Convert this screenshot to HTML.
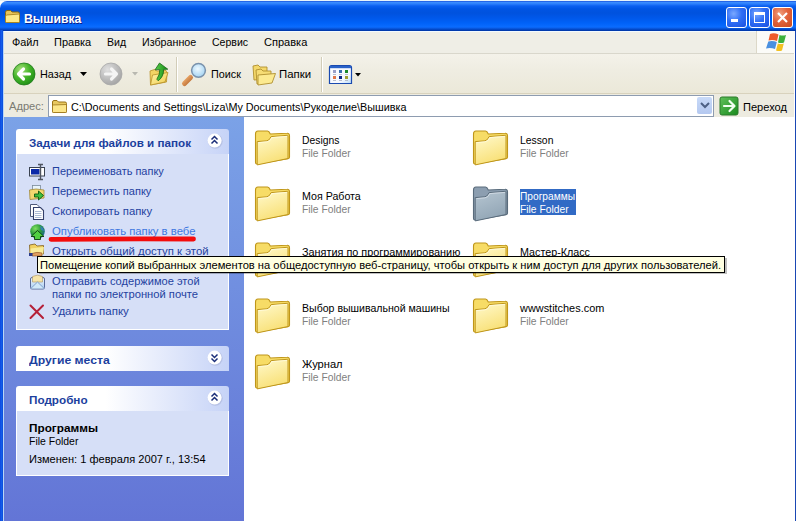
<!DOCTYPE html>
<html><head><meta charset="utf-8"><style>
html,body{margin:0;padding:0;}
body{width:796px;height:521px;position:relative;overflow:hidden;background:#fff;font-family:'Liberation Sans',sans-serif;}
</style></head><body>
<div style="position:absolute;left:0;top:0;width:796px;height:1px;background:#e6f2fa"></div>
<div style="position:absolute;left:0;top:1px;width:796px;height:30px;border-radius:7px 0 0 0;background:linear-gradient(to bottom,#0a3ad0 0px,#3d90ff 1px,#2a7dfb 3px,#0a5ff0 5px,#0054e3 8px,#0052de 12px,#0058ea 17px,#0062f8 22px,#0a6cff 26px,#0a5ee8 27px,#0040bb 29px,#0033a0 30px)"></div>
<svg style="position:absolute;left:4px;top:9px" width="17" height="15" viewBox="0 0 17 15">
<path d="M1.5 3.5 Q1.5 1.5 3 1.5 L6.5 1.5 L8 3 L14 3 Q15.5 3 15.5 4.5 L15.5 12.5 Q15.5 13.5 14.5 13.5 L2.5 13.5 Q1.5 13.5 1.5 12.5 Z" fill="#e8c45a" stroke="#8a6a10" stroke-width="1"/>
<path d="M2.5 6 L15.5 5 L15.5 12.5 Q15.5 13.5 14.5 13.5 L2.5 13.5 Q1.5 13.5 1.5 12.5 L1.5 7 Z" fill="#fde98a" stroke="#a07a18" stroke-width="0.8"/>
</svg>
<div style="position:absolute;left:24px;top:10px;font:bold 13px/16px 'Liberation Sans',sans-serif;color:#fff;text-shadow:1px 1px 0 #0a1e8c;white-space:nowrap;transform:scale(0.94,1.05);transform-origin:0 0">Вышивка</div>
<div style="position:absolute;left:726px;top:7px;width:19px;height:19px;border:1px solid #fff;border-radius:3px;background:radial-gradient(circle at 35% 30%,#7aa8ff 0%,#2f6ef5 45%,#1a50e0 100%)"></div>
<div style="position:absolute;left:749px;top:7px;width:19px;height:19px;border:1px solid #fff;border-radius:3px;background:radial-gradient(circle at 35% 30%,#7aa8ff 0%,#2f6ef5 45%,#1a50e0 100%)"></div>
<div style="position:absolute;left:772px;top:7px;width:19px;height:19px;border:1px solid #fff;border-radius:3px;background:radial-gradient(circle at 35% 30%,#f0a080 0%,#e2623c 45%,#c84a20 100%)"></div>
<div style="position:absolute;left:731px;top:19px;width:7px;height:3px;background:#fff"></div>
<div style="position:absolute;left:754px;top:12px;width:9px;height:7px;border:1px solid #fff;border-top-width:3px"></div>
<svg style="position:absolute;left:772px;top:7px" width="21" height="21" viewBox="0 0 21 21"><path d="M6 6 L15 15 M15 6 L6 15" stroke="#fff" stroke-width="2.2"/></svg>
<div style="position:absolute;left:0px;top:30px;width:3px;height:491px;background:linear-gradient(to right,#0831d9 0,#166aee 1px,#0d50e0 2px)"></div>
<div style="position:absolute;left:795px;top:31px;width:1px;height:490px;background:#1a48b4"></div>
<div style="position:absolute;left:3px;top:31px;width:791px;height:22px;background:#efeee6"></div>
<div style="position:absolute;left:3px;top:53px;width:791px;height:1px;background:#d9d7cc"></div>
<div style="position:absolute;left:3px;top:31px;width:791px;height:1px;background:#f2faff"></div>
<div style="position:absolute;left:756px;top:31px;width:38px;height:22px;background:#fbfbf8;border-left:1px solid #dcd8c8"></div>
<svg style="position:absolute;left:760px;top:30px" width="30" height="24" viewBox="760 30 30 24">
<path d="M770 34 Q774 32.5 778.5 34.5 L777 41 Q773 39.5 768.5 40.5 Z" fill="#ee5a2a"/>
<path d="M779.5 35 Q782.5 36 786 35 L784 42.5 Q781 43.5 778 42.5 Z" fill="#3cb03a"/>
<path d="M768.3 41.5 Q772.5 40.5 776.8 42 L775 49 Q770.5 47.5 766 48.5 Z" fill="#4a90e0"/>
<path d="M777.8 43.5 Q781 44.5 783.8 43.5 L782 50.5 Q779 51.5 776 50.5 Z" fill="#f2c020"/>
</svg>
<div id="t0" style="position:absolute;left:12px;top:36px;white-space:nowrap;font:400 11px/13px 'Liberation Sans',sans-serif;color:#000;transform:scaleX(0.9872);transform-origin:0 0;"><span style="">Файл</span></div>
<div id="t1" style="position:absolute;left:54px;top:36px;white-space:nowrap;font:400 11px/13px 'Liberation Sans',sans-serif;color:#000;"><span style="">Правка</span></div>
<div id="t2" style="position:absolute;left:107px;top:36px;white-space:nowrap;font:400 11px/13px 'Liberation Sans',sans-serif;color:#000;transform:scaleX(0.9595);transform-origin:0 0;"><span style="">Вид</span></div>
<div id="t3" style="position:absolute;left:142px;top:36px;white-space:nowrap;font:400 11px/13px 'Liberation Sans',sans-serif;color:#000;transform:scaleX(0.9722);transform-origin:0 0;"><span style="">Избранное</span></div>
<div id="t4" style="position:absolute;left:212px;top:36px;white-space:nowrap;font:400 11px/13px 'Liberation Sans',sans-serif;color:#000;transform:scaleX(0.9583);transform-origin:0 0;"><span style="">Сервис</span></div>
<div id="t5" style="position:absolute;left:264px;top:36px;white-space:nowrap;font:400 11px/13px 'Liberation Sans',sans-serif;color:#000;transform:scaleX(1.0033);transform-origin:0 0;"><span style="">Справка</span></div>
<div style="position:absolute;left:3px;top:54px;width:791px;height:40px;background:linear-gradient(to bottom,#f4f2ea 0,#efede2 40%,#ebe8d8 100%)"></div>
<div style="position:absolute;left:3px;top:93px;width:791px;height:1px;background:#d8d2bd"></div>
<svg style="position:absolute;left:12px;top:62px" width="25" height="25" viewBox="0 0 25 25">
<defs><radialGradient id="gb" cx="0.35" cy="0.3" r="0.8"><stop offset="0" stop-color="#a6e07a"/><stop offset="0.5" stop-color="#45b52a"/><stop offset="1" stop-color="#1a8a14"/></radialGradient></defs>
<circle cx="12" cy="12" r="11" fill="url(#gb)" stroke="#1f7a1a" stroke-width="0.8"/>
<path d="M11.5 7 L6.5 12 L11.5 17 M6.5 12 L17.5 12" stroke="#fff" stroke-width="3.2" stroke-linecap="round" stroke-linejoin="round" fill="none"/>
</svg>
<div id="t6" style="position:absolute;left:40px;top:68px;white-space:nowrap;font:400 11px/13px 'Liberation Sans',sans-serif;color:#000;transform:scaleX(0.9863);transform-origin:0 0;"><span style="">Назад</span></div>
<svg style="position:absolute;left:80px;top:72px" width="7" height="4"><path d="M0 0 L7 0 L3.5 4 Z" fill="#000"/></svg>
<svg style="position:absolute;left:99px;top:62px" width="25" height="25" viewBox="0 0 25 25">
<defs><radialGradient id="gf" cx="0.35" cy="0.3" r="0.8"><stop offset="0" stop-color="#e0e0e0"/><stop offset="0.6" stop-color="#b8b8b8"/><stop offset="1" stop-color="#a0a0a0"/></radialGradient></defs>
<circle cx="12" cy="12" r="11" fill="url(#gf)" stroke="#a8a8a8" stroke-width="0.8"/>
<path d="M12.5 7 L17.5 12 L12.5 17 M17.5 12 L6.5 12" stroke="#f4f4f4" stroke-width="3.2" stroke-linecap="round" stroke-linejoin="round" fill="none"/>
</svg>
<svg style="position:absolute;left:132px;top:72px" width="6" height="4"><path d="M0 0 L6 0 L3 3.5 Z" fill="#b8b8b0"/></svg>
<svg style="position:absolute;left:146px;top:60px" width="26" height="28" viewBox="146 60 26 28">
<defs><linearGradient id="gup" x1="0" y1="0" x2="1" y2="1"><stop offset="0" stop-color="#fff4a8"/><stop offset="1" stop-color="#f0cc50"/></linearGradient>
<linearGradient id="gar" x1="0" y1="0" x2="1" y2="0"><stop offset="0" stop-color="#5ad04a"/><stop offset="1" stop-color="#158a15"/></linearGradient></defs>
<path d="M150 71 L154.5 69.5 L157 71 L166 70.5 L167 73 L166.5 82 L150.5 85 Z" fill="#f2d464" stroke="#b89028" stroke-width="0.8"/>
<path d="M150.5 85 L152.5 75 L168 72.5 L165 82 Z" fill="url(#gup)" stroke="#b89028" stroke-width="0.8"/>
<path d="M159.5 63 L167.8 69.2 L163.6 69.4 Q164 76.5 158.2 80.8 L156.8 79.2 Q160 74.5 159.8 69.6 L155 69.8 Z" fill="url(#gar)" stroke="#0e5a10" stroke-width="0.7"/>
</svg>
<div style="position:absolute;left:176px;top:57px;width:1px;height:35px;background:#d2cdb8;border-right:1px solid #fff"></div>
<svg style="position:absolute;left:180px;top:60px" width="30" height="28" viewBox="180 60 30 28">
<defs><radialGradient id="gs" cx="0.45" cy="0.4" r="0.7"><stop offset="0" stop-color="#eef9ff"/><stop offset="1" stop-color="#98cdf0"/></radialGradient>
<linearGradient id="gh" x1="0" y1="0" x2="1" y2="1"><stop offset="0" stop-color="#f2b070"/><stop offset="1" stop-color="#b86a30"/></linearGradient></defs>
<path d="M184.5 83.5 L190.5 77.5" stroke="url(#gh)" stroke-width="5" stroke-linecap="round"/>
<circle cx="198.5" cy="70.3" r="6.9" fill="url(#gs)" stroke="#7a92ac" stroke-width="1.5"/>
</svg>
<div id="t7" style="position:absolute;left:211px;top:68px;white-space:nowrap;font:400 11px/13px 'Liberation Sans',sans-serif;color:#000;transform:scaleX(0.9808);transform-origin:0 0;"><span style="">Поиск</span></div>
<svg style="position:absolute;left:252px;top:64px" width="25" height="22" viewBox="0 0 25 22">
<path d="M1 2 L6 1 L8 3 L15 3 L15 15 L2 16 Z" fill="#f4d86a" stroke="#b09030" stroke-width="0.9"/>
<path d="M4 6 L9 5 L11 7 L19 7 L19 18 L5 20 Z" fill="#f6dc74" stroke="#b09030" stroke-width="0.9"/>
<path d="M6 11 L23.5 9.5 L20 19 L6 21 Z" fill="#fcea90" stroke="#b09030" stroke-width="0.9"/>
</svg>
<div id="t8" style="position:absolute;left:279px;top:68px;white-space:nowrap;font:400 11px/13px 'Liberation Sans',sans-serif;color:#000;transform:scaleX(1.0343);transform-origin:0 0;"><span style="">Папки</span></div>
<div style="position:absolute;left:321px;top:57px;width:1px;height:35px;background:#d2cdb8;border-right:1px solid #fff"></div>
<svg style="position:absolute;left:328px;top:64px" width="26" height="22" viewBox="328 64 26 22">
<defs><linearGradient id="gv" x1="0" y1="0" x2="1" y2="1"><stop offset="0" stop-color="#fff"/><stop offset="0.7" stop-color="#f4f8ff"/><stop offset="1" stop-color="#b8dcf8"/></linearGradient></defs>
<path d="M329.5 67.5 Q329.5 65.5 331.5 65.5 L349.5 65.5 Q351.5 65.5 351.5 67.5 L351.5 83.5 L329.5 83.5 Z" fill="url(#gv)" stroke="#1a4ab0" stroke-width="1.2"/>
<rect x="330" y="66" width="21" height="2.2" fill="#2a62c8"/>
<rect x="333" y="70" width="3" height="3" fill="#9aa0c8"/><rect x="339" y="70" width="3" height="3" fill="#3a70b0"/><rect x="345" y="70" width="3" height="3" fill="#1a8a2a"/>
<rect x="333" y="76" width="3" height="3" fill="#e07848"/><rect x="339" y="76" width="3" height="3" fill="#102a88"/><rect x="345" y="76" width="3" height="3" fill="#a0a030"/>
<path d="M333 74.5 H336 M339 74.5 H342 M345 74.5 H348 M333 80.5 H336 M339 80.5 H342 M345 80.5 H348" stroke="#a8b0c0" stroke-width="0.8"/>
</svg>
<svg style="position:absolute;left:355px;top:73px" width="6" height="4"><path d="M0 0 L6 0 L3 3.5 Z" fill="#000"/></svg>
<div style="position:absolute;left:3px;top:94px;width:791px;height:23px;background:#edebe0"></div>
<div id="t9" style="position:absolute;left:9px;top:100px;white-space:nowrap;font:400 11px/13px 'Liberation Sans',sans-serif;color:#7a7a72;transform:scaleX(1.0102);transform-origin:0 0;"><span style="">Адрес:</span></div>
<div style="position:absolute;left:48px;top:95px;width:664px;height:20px;background:#fff;border:1px solid #8e9cb0"></div>
<svg style="position:absolute;left:51px;top:99px" width="17" height="15" viewBox="0 0 17 15">
<path d="M1.5 3 Q1.5 1.5 3 1.5 L6 1.5 L7.5 3 L14 3 Q15.5 3 15.5 4.5 L15.5 12.5 Q15.5 13.5 14.5 13.5 L2.5 13.5 Q1.5 13.5 1.5 12.5 Z" fill="#e8c860" stroke="#9a7418" stroke-width="1"/>
<path d="M1.5 6 L15.5 5.5 L15.5 12.5 Q15.5 13.5 14.5 13.5 L2.5 13.5 Q1.5 13.5 1.5 12.5 Z" fill="#fce68a" stroke="#9a7418" stroke-width="0.8"/>
</svg>
<div id="t10" style="position:absolute;left:71px;top:101px;white-space:nowrap;font:400 11px/13px 'Liberation Sans',sans-serif;color:#000;transform:scaleX(0.9825);transform-origin:0 0;"><span style="">C:\Documents and Settings\Liza\My Documents\Рукоделие\Вышивка</span></div>
<div style="position:absolute;left:697px;top:97px;width:15px;height:17px;border-radius:2px;background:linear-gradient(to bottom,#c8daf8,#b4c8f0)"></div>
<svg style="position:absolute;left:700px;top:102px" width="10" height="7"><path d="M1 1 L5 5 L9 1" stroke="#4d6185" stroke-width="2" fill="none"/></svg>
<svg style="position:absolute;left:719px;top:96px" width="21" height="21" viewBox="-0.5 -0.5 21 21">
<defs><linearGradient id="gg" x1="0" y1="0" x2="1" y2="1"><stop offset="0" stop-color="#5fc05a"/><stop offset="1" stop-color="#1a8a1e"/></linearGradient></defs>
<rect x="0.5" y="0.5" width="18" height="18" rx="2" fill="url(#gg)" stroke="#2a7a2a"/>
<path d="M10 4.5 L15 9.5 L10 14.5 M14.5 9.5 L4.5 9.5" stroke="#f0fff0" stroke-width="2.2" stroke-linecap="round" stroke-linejoin="round" fill="none"/>
</svg>
<div id="t11" style="position:absolute;left:743px;top:101px;white-space:nowrap;font:400 11px/13px 'Liberation Sans',sans-serif;color:#000;transform:scaleX(1.0068);transform-origin:0 0;"><span style="">Переход</span></div>
<div style="position:absolute;left:3px;top:117px;width:241px;height:404px;background:linear-gradient(to bottom,#7ba2e7 0,#6375d6 100%)"></div>
<div style="position:absolute;left:3px;top:31px;width:1px;height:490px;background:#b8d6f6"></div>
<div style="position:absolute;left:16px;top:129px;width:213px;height:25px;border-radius:3px 3px 0 0;background:linear-gradient(to right,#fff 0,#fff 42%,#c6d3f7 100%)"></div>
<div style="position:absolute;left:16px;top:154px;width:211px;height:175px;background:#d6dff7;border:1px solid #fff;border-top:0"></div>
<div id="t12" style="position:absolute;left:29px;top:137px;white-space:nowrap;font:700 11px/13px 'Liberation Sans',sans-serif;color:#1c3f9e;transform:scaleX(1.0600);transform-origin:0 0;"><span style="">Задачи для файлов и папок</span></div>
<svg style="position:absolute;left:207px;top:133px" width="18" height="18" viewBox="0 0 18 18">
<circle cx="8.3" cy="8.3" r="7.4" fill="#aab4d8" opacity="0.6"/>
<circle cx="7.6" cy="7.6" r="7" fill="#fff"/>
<path d="M4.5 6.5 L7.5 3.5 L10.5 6.5 M4.5 10.5 L7.5 7.5 L10.5 10.5" stroke="#1a2d78" stroke-width="1.5" fill="none"/>
</svg>
<div style="position:absolute;left:16px;top:346px;width:213px;height:25px;border-radius:3px 3px 0 0;background:linear-gradient(to right,#fff 0,#fff 42%,#c6d3f7 100%)"></div>
<div id="t13" style="position:absolute;left:29px;top:354px;white-space:nowrap;font:700 11px/13px 'Liberation Sans',sans-serif;color:#1c3f9e;transform:scaleX(1.1102);transform-origin:0 0;"><span style="">Другие места</span></div>
<svg style="position:absolute;left:207px;top:350px" width="18" height="18" viewBox="0 0 18 18">
<circle cx="8.3" cy="8.3" r="7.4" fill="#aab4d8" opacity="0.6"/>
<circle cx="7.6" cy="7.6" r="7" fill="#fff"/>
<path d="M4.5 4.5 L7.5 7.5 L10.5 4.5 M4.5 8.5 L7.5 11.5 L10.5 8.5" stroke="#1a2d78" stroke-width="1.5" fill="none"/>
</svg>
<div style="position:absolute;left:16px;top:386px;width:213px;height:25px;border-radius:3px 3px 0 0;background:linear-gradient(to right,#fff 0,#fff 42%,#c6d3f7 100%)"></div>
<div style="position:absolute;left:16px;top:411px;width:211px;height:64px;background:#d6dff7;border:1px solid #fff;border-top:0"></div>
<div id="t14" style="position:absolute;left:29px;top:394px;white-space:nowrap;font:700 11px/13px 'Liberation Sans',sans-serif;color:#1c3f9e;transform:scaleX(1.0642);transform-origin:0 0;"><span style="">Подробно</span></div>
<svg style="position:absolute;left:207px;top:390px" width="18" height="18" viewBox="0 0 18 18">
<circle cx="8.3" cy="8.3" r="7.4" fill="#aab4d8" opacity="0.6"/>
<circle cx="7.6" cy="7.6" r="7" fill="#fff"/>
<path d="M4.5 6.5 L7.5 3.5 L10.5 6.5 M4.5 10.5 L7.5 7.5 L10.5 10.5" stroke="#1a2d78" stroke-width="1.5" fill="none"/>
</svg>
<div id="t15" style="position:absolute;left:52px;top:165px;white-space:nowrap;font:400 11px/13px 'Liberation Sans',sans-serif;color:#1f42a0;transform:scaleX(0.9967);transform-origin:0 0;"><span style="">Переименовать папку</span></div>
<div id="t16" style="position:absolute;left:52px;top:185px;white-space:nowrap;font:400 11px/13px 'Liberation Sans',sans-serif;color:#1f42a0;transform:scaleX(1.0048);transform-origin:0 0;"><span style="">Переместить папку</span></div>
<div id="t17" style="position:absolute;left:52px;top:205px;white-space:nowrap;font:400 11px/13px 'Liberation Sans',sans-serif;color:#1f42a0;transform:scaleX(1.0295);transform-origin:0 0;"><span style="">Скопировать папку</span></div>
<div id="t18" style="position:absolute;left:52px;top:225px;white-space:nowrap;font:400 11px/13px 'Liberation Sans',sans-serif;color:#3f78e0;transform:scaleX(1.0293);transform-origin:0 0;"><span style="">Опубликовать папку в вебе</span></div>
<div id="t19" style="position:absolute;left:52px;top:245px;white-space:nowrap;font:400 11px/13px 'Liberation Sans',sans-serif;color:#1f42a0;transform:scaleX(1.0357);transform-origin:0 0;"><span style="">Открыть общий доступ к этой</span></div>
<div id="t20" style="position:absolute;left:52px;top:275px;white-space:nowrap;font:400 11px/13px 'Liberation Sans',sans-serif;color:#1f42a0;transform:scaleX(1.0063);transform-origin:0 0;"><span style="">Отправить содержимое этой</span></div>
<div id="t21" style="position:absolute;left:52px;top:288px;white-space:nowrap;font:400 11px/13px 'Liberation Sans',sans-serif;color:#1f42a0;transform:scaleX(1.0184);transform-origin:0 0;"><span style="">папки по электронной почте</span></div>
<div id="t22" style="position:absolute;left:52px;top:305px;white-space:nowrap;font:400 11px/13px 'Liberation Sans',sans-serif;color:#1f42a0;transform:scaleX(1.0445);transform-origin:0 0;"><span style="">Удалить папку</span></div>
<svg style="position:absolute;left:27px;top:162px" width="20" height="20" viewBox="27 162 20 20"><rect x="29.5" y="167.5" width="15" height="8.5" fill="#fff" stroke="#3a4250" stroke-width="1"/>
<rect x="31" y="169" width="8.5" height="5.5" fill="#0a28a8"/>
<path d="M40.5 164.5 V179.5 M38 164.5 H43 M38 179.5 H43" stroke="#505560" stroke-width="1.4" fill="none"/></svg>
<svg style="position:absolute;left:27px;top:183px" width="20" height="20" viewBox="27 183 20 20"><rect x="32.5" y="185.5" width="8" height="7" fill="#e8f4fc" stroke="#7a8a9a" stroke-width="0.8"/>
<path d="M29.5 190 L36 189 L44 190 L44 198 L30 199.5 Z" fill="#f4d870" stroke="#a08838" stroke-width="0.8"/>
<path d="M34.5 194 H38.5 V191 L43.5 195.5 L38.5 200 V197 H34.5 Z" fill="#40c040" stroke="#0e5a0e" stroke-width="0.9"/></svg>
<svg style="position:absolute;left:27px;top:202px" width="20" height="20" viewBox="27 202 20 20"><path d="M30.5 204.5 H37 L39.5 207 V216.5 H30.5 Z" fill="#fff" stroke="#505a78" stroke-width="1"/>
<path d="M33.5 207.5 H40.5 L43.5 210.5 V219.5 H33.5 Z" fill="#fff" stroke="#34406a" stroke-width="1.1"/>
<path d="M35 211.5 H41.5 M35 213.5 H41.5 M35 215.5 H41.5 M35 217.5 H41.5" stroke="#98aac8" stroke-width="0.8"/></svg>
<svg style="position:absolute;left:27px;top:221px" width="20" height="20" viewBox="27 221 20 20"><defs><radialGradient id="gw" cx="0.35" cy="0.3" r="0.8"><stop offset="0" stop-color="#80e060"/><stop offset="0.5" stop-color="#2a9a3a"/><stop offset="1" stop-color="#1a5aa0"/></radialGradient></defs>
<circle cx="37.5" cy="231.5" r="7.3" fill="url(#gw)"/>
<path d="M40 225.5 Q43 227 44 231 L41 230 Z" fill="#3a7ad0" opacity="0.8"/>
<path d="M31 236.5 L37.5 230.5 L44 236.5 H40.5 V239.5 H34.5 V236.5 Z" fill="#50d040" stroke="#0a3a0a" stroke-width="0.9"/></svg>
<svg style="position:absolute;left:27px;top:242px" width="20" height="16" viewBox="27 242 20 16"><path d="M29.5 245 L35 244 L37 246 L43.5 245.5 L43.5 254 L30 255 Z" fill="#f0d060" stroke="#806020" stroke-width="0.8"/>
<path d="M30.5 248.5 L44 247 L43 254.5 L30.5 255 Z" fill="#f8ec98"/>
<path d="M32 253.5 Q37 251.5 42 253 L42 256 L32 256 Z" fill="#e0a060" stroke="#8a5020" stroke-width="0.6"/>
<rect x="29" y="253" width="3.5" height="3" fill="#2a3a8a"/></svg>
<svg style="position:absolute;left:28px;top:272px" width="20" height="20" viewBox="28 272 20 20"><defs><linearGradient id="gm" x1="0" y1="0" x2="0" y2="1"><stop offset="0" stop-color="#f0f6fc"/><stop offset="1" stop-color="#a8cdf0"/></linearGradient></defs>
<rect x="30.5" y="277.5" width="14" height="11.5" rx="1.5" fill="url(#gm)" stroke="#5a6a98" stroke-width="1"/>
<path d="M32.5 276.5 Q37.5 273.8 42.5 276.5 V282 H32.5 Z" fill="#f6e4a8" stroke="#a89060" stroke-width="0.6"/>
<path d="M30.8 288.5 L37.5 282 L44.2 288.5" fill="#d0e8f8" stroke="#7a9ac8" stroke-width="0.9"/></svg>
<svg style="position:absolute;left:27px;top:303px" width="18" height="17" viewBox="27 303 18 17"><path d="M30.5 305.5 L43 318 M43 305.5 L30.5 318" stroke="#b52038" stroke-width="2" stroke-linecap="round"/></svg>
<svg style="position:absolute;left:44px;top:232px" width="156" height="14" viewBox="44 232 156 14"><path d="M51 239.3 Q120 238.6 193.5 239" stroke="#f40c0c" stroke-width="4.8" stroke-linecap="round" fill="none"/></svg>
<div id="t23" style="position:absolute;left:29px;top:422px;white-space:nowrap;font:700 11px/13px 'Liberation Sans',sans-serif;color:#000;transform:scaleX(1.0708);transform-origin:0 0;"><span style="">Программы</span></div>
<div id="t24" style="position:absolute;left:29px;top:435px;white-space:nowrap;font:400 11px/13px 'Liberation Sans',sans-serif;color:#000;transform:scaleX(0.9506);transform-origin:0 0;"><span style="">File Folder</span></div>
<div id="t25" style="position:absolute;left:29px;top:453px;white-space:nowrap;font:400 11px/13px 'Liberation Sans',sans-serif;color:#000;transform:scaleX(1.0047);transform-origin:0 0;"><span style="">Изменен: 1 февраля 2007 г., 13:54</span></div>
<svg style="position:absolute;left:254px;top:130px" width="38" height="38" viewBox="0 0 38 38">
<defs><linearGradient id="fg254_130" x1="0.2" y1="0" x2="0.6" y2="1"><stop offset="0" stop-color="#fff8c8"/><stop offset="1" stop-color="#f8df72"/></linearGradient></defs>
<path d="M1.5 4 Q1.5 1 4 1 L13.5 1 Q15 1 16.3 4 L33 3.2 Q35.5 3 35.5 6 L35.5 27.3 Q35.5 28.5 34 28.7 L3 34 Q1.5 34 1.5 32.5 Z" fill="#f7dc66" stroke="#bf961a" stroke-width="1.1"/>
<path d="M3.2 11.6 L12.9 10.8 Q15.5 10.5 17.1 6.6 L33.4 5.3 Q34 5.3 34 6 L34 28.5 L3.2 34.9 Z" fill="url(#fg254_130)" stroke="#bf961a" stroke-width="1"/>
<path d="M4.5 12.6 L13 11.8 Q16.2 11.5 17.8 7.6 L33 6.4" fill="none" stroke="#fffbe0" stroke-width="0.8"/>
</svg>
<div id="t26" style="position:absolute;left:302px;top:134px;white-space:nowrap;font:400 11px/13px 'Liberation Sans',sans-serif;color:#000;transform:scaleX(0.9409);transform-origin:0 0;"><span style="">Designs</span></div>
<div id="t27" style="position:absolute;left:302px;top:147px;white-space:nowrap;font:400 11px/13px 'Liberation Sans',sans-serif;color:#808080;transform:scaleX(0.9352);transform-origin:0 0;"><span style="">File Folder</span></div>
<svg style="position:absolute;left:472px;top:130px" width="38" height="38" viewBox="0 0 38 38">
<defs><linearGradient id="fg472_130" x1="0.2" y1="0" x2="0.6" y2="1"><stop offset="0" stop-color="#fff8c8"/><stop offset="1" stop-color="#f8df72"/></linearGradient></defs>
<path d="M1.5 4 Q1.5 1 4 1 L13.5 1 Q15 1 16.3 4 L33 3.2 Q35.5 3 35.5 6 L35.5 27.3 Q35.5 28.5 34 28.7 L3 34 Q1.5 34 1.5 32.5 Z" fill="#f7dc66" stroke="#bf961a" stroke-width="1.1"/>
<path d="M3.2 11.6 L12.9 10.8 Q15.5 10.5 17.1 6.6 L33.4 5.3 Q34 5.3 34 6 L34 28.5 L3.2 34.9 Z" fill="url(#fg472_130)" stroke="#bf961a" stroke-width="1"/>
<path d="M4.5 12.6 L13 11.8 Q16.2 11.5 17.8 7.6 L33 6.4" fill="none" stroke="#fffbe0" stroke-width="0.8"/>
</svg>
<div id="t28" style="position:absolute;left:520px;top:134px;white-space:nowrap;font:400 11px/13px 'Liberation Sans',sans-serif;color:#000;transform:scaleX(0.9413);transform-origin:0 0;"><span style="">Lesson</span></div>
<div id="t29" style="position:absolute;left:520px;top:147px;white-space:nowrap;font:400 11px/13px 'Liberation Sans',sans-serif;color:#808080;transform:scaleX(0.9352);transform-origin:0 0;"><span style="">File Folder</span></div>
<svg style="position:absolute;left:254px;top:186px" width="38" height="38" viewBox="0 0 38 38">
<defs><linearGradient id="fg254_186" x1="0.2" y1="0" x2="0.6" y2="1"><stop offset="0" stop-color="#fff8c8"/><stop offset="1" stop-color="#f8df72"/></linearGradient></defs>
<path d="M1.5 4 Q1.5 1 4 1 L13.5 1 Q15 1 16.3 4 L33 3.2 Q35.5 3 35.5 6 L35.5 27.3 Q35.5 28.5 34 28.7 L3 34 Q1.5 34 1.5 32.5 Z" fill="#f7dc66" stroke="#bf961a" stroke-width="1.1"/>
<path d="M3.2 11.6 L12.9 10.8 Q15.5 10.5 17.1 6.6 L33.4 5.3 Q34 5.3 34 6 L34 28.5 L3.2 34.9 Z" fill="url(#fg254_186)" stroke="#bf961a" stroke-width="1"/>
<path d="M4.5 12.6 L13 11.8 Q16.2 11.5 17.8 7.6 L33 6.4" fill="none" stroke="#fffbe0" stroke-width="0.8"/>
</svg>
<div id="t30" style="position:absolute;left:302px;top:190px;white-space:nowrap;font:400 11px/13px 'Liberation Sans',sans-serif;color:#000;transform:scaleX(0.9684);transform-origin:0 0;"><span style="">Моя Работа</span></div>
<div id="t31" style="position:absolute;left:302px;top:203px;white-space:nowrap;font:400 11px/13px 'Liberation Sans',sans-serif;color:#808080;transform:scaleX(0.9352);transform-origin:0 0;"><span style="">File Folder</span></div>
<svg style="position:absolute;left:472px;top:186px" width="38" height="38" viewBox="0 0 38 38">
<defs><linearGradient id="fg472_186" x1="0.2" y1="0" x2="0.6" y2="1"><stop offset="0" stop-color="#b4c4d0"/><stop offset="1" stop-color="#90a4b4"/></linearGradient></defs>
<path d="M1.5 4 Q1.5 1 4 1 L13.5 1 Q15 1 16.3 4 L33 3.2 Q35.5 3 35.5 6 L35.5 27.3 Q35.5 28.5 34 28.7 L3 34 Q1.5 34 1.5 32.5 Z" fill="#8c9eb0" stroke="#5a6c7c" stroke-width="1.1"/>
<path d="M3.2 11.6 L12.9 10.8 Q15.5 10.5 17.1 6.6 L33.4 5.3 Q34 5.3 34 6 L34 28.5 L3.2 34.9 Z" fill="url(#fg472_186)" stroke="#5a6c7c" stroke-width="1"/>
<path d="M4.5 12.6 L13 11.8 Q16.2 11.5 17.8 7.6 L33 6.4" fill="none" stroke="#d8e0e8" stroke-width="0.8"/>
</svg>
<div style="position:absolute;left:520px;top:189px;width:56px;height:26px;background:#316ac5"></div>
<div id="t32" style="position:absolute;left:520px;top:190px;white-space:nowrap;font:400 11px/13px 'Liberation Sans',sans-serif;color:#fff;transform:scaleX(0.9256);transform-origin:0 0;"><span style="">Программы</span></div>
<div id="t33" style="position:absolute;left:520px;top:203px;white-space:nowrap;font:400 11px/13px 'Liberation Sans',sans-serif;color:#fff;transform:scaleX(0.9352);transform-origin:0 0;"><span style="">File Folder</span></div>
<svg style="position:absolute;left:254px;top:242px" width="38" height="38" viewBox="0 0 38 38">
<defs><linearGradient id="fg254_242" x1="0.2" y1="0" x2="0.6" y2="1"><stop offset="0" stop-color="#fff8c8"/><stop offset="1" stop-color="#f8df72"/></linearGradient></defs>
<path d="M1.5 4 Q1.5 1 4 1 L13.5 1 Q15 1 16.3 4 L33 3.2 Q35.5 3 35.5 6 L35.5 27.3 Q35.5 28.5 34 28.7 L3 34 Q1.5 34 1.5 32.5 Z" fill="#f7dc66" stroke="#bf961a" stroke-width="1.1"/>
<path d="M3.2 11.6 L12.9 10.8 Q15.5 10.5 17.1 6.6 L33.4 5.3 Q34 5.3 34 6 L34 28.5 L3.2 34.9 Z" fill="url(#fg254_242)" stroke="#bf961a" stroke-width="1"/>
<path d="M4.5 12.6 L13 11.8 Q16.2 11.5 17.8 7.6 L33 6.4" fill="none" stroke="#fffbe0" stroke-width="0.8"/>
</svg>
<div id="t34" style="position:absolute;left:302px;top:246px;white-space:nowrap;font:400 11px/13px 'Liberation Sans',sans-serif;color:#000;transform:scaleX(0.9871);transform-origin:0 0;"><span style="">Занятия по программированию</span></div>
<div id="t35" style="position:absolute;left:302px;top:259px;white-space:nowrap;font:400 11px/13px 'Liberation Sans',sans-serif;color:#808080;transform:scaleX(0.9352);transform-origin:0 0;"><span style="">File Folder</span></div>
<svg style="position:absolute;left:472px;top:242px" width="38" height="38" viewBox="0 0 38 38">
<defs><linearGradient id="fg472_242" x1="0.2" y1="0" x2="0.6" y2="1"><stop offset="0" stop-color="#fff8c8"/><stop offset="1" stop-color="#f8df72"/></linearGradient></defs>
<path d="M1.5 4 Q1.5 1 4 1 L13.5 1 Q15 1 16.3 4 L33 3.2 Q35.5 3 35.5 6 L35.5 27.3 Q35.5 28.5 34 28.7 L3 34 Q1.5 34 1.5 32.5 Z" fill="#f7dc66" stroke="#bf961a" stroke-width="1.1"/>
<path d="M3.2 11.6 L12.9 10.8 Q15.5 10.5 17.1 6.6 L33.4 5.3 Q34 5.3 34 6 L34 28.5 L3.2 34.9 Z" fill="url(#fg472_242)" stroke="#bf961a" stroke-width="1"/>
<path d="M4.5 12.6 L13 11.8 Q16.2 11.5 17.8 7.6 L33 6.4" fill="none" stroke="#fffbe0" stroke-width="0.8"/>
</svg>
<div id="t36" style="position:absolute;left:520px;top:246px;white-space:nowrap;font:400 11px/13px 'Liberation Sans',sans-serif;color:#000;transform:scaleX(0.9767);transform-origin:0 0;"><span style="">Мастер-Класс</span></div>
<div id="t37" style="position:absolute;left:520px;top:259px;white-space:nowrap;font:400 11px/13px 'Liberation Sans',sans-serif;color:#808080;transform:scaleX(0.9352);transform-origin:0 0;"><span style="">File Folder</span></div>
<svg style="position:absolute;left:254px;top:298px" width="38" height="38" viewBox="0 0 38 38">
<defs><linearGradient id="fg254_298" x1="0.2" y1="0" x2="0.6" y2="1"><stop offset="0" stop-color="#fff8c8"/><stop offset="1" stop-color="#f8df72"/></linearGradient></defs>
<path d="M1.5 4 Q1.5 1 4 1 L13.5 1 Q15 1 16.3 4 L33 3.2 Q35.5 3 35.5 6 L35.5 27.3 Q35.5 28.5 34 28.7 L3 34 Q1.5 34 1.5 32.5 Z" fill="#f7dc66" stroke="#bf961a" stroke-width="1.1"/>
<path d="M3.2 11.6 L12.9 10.8 Q15.5 10.5 17.1 6.6 L33.4 5.3 Q34 5.3 34 6 L34 28.5 L3.2 34.9 Z" fill="url(#fg254_298)" stroke="#bf961a" stroke-width="1"/>
<path d="M4.5 12.6 L13 11.8 Q16.2 11.5 17.8 7.6 L33 6.4" fill="none" stroke="#fffbe0" stroke-width="0.8"/>
</svg>
<div id="t38" style="position:absolute;left:302px;top:302px;white-space:nowrap;font:400 11px/13px 'Liberation Sans',sans-serif;color:#000;transform:scaleX(0.9604);transform-origin:0 0;"><span style="">Выбор вышивальной машины</span></div>
<div id="t39" style="position:absolute;left:302px;top:315px;white-space:nowrap;font:400 11px/13px 'Liberation Sans',sans-serif;color:#808080;transform:scaleX(0.9352);transform-origin:0 0;"><span style="">File Folder</span></div>
<svg style="position:absolute;left:472px;top:298px" width="38" height="38" viewBox="0 0 38 38">
<defs><linearGradient id="fg472_298" x1="0.2" y1="0" x2="0.6" y2="1"><stop offset="0" stop-color="#fff8c8"/><stop offset="1" stop-color="#f8df72"/></linearGradient></defs>
<path d="M1.5 4 Q1.5 1 4 1 L13.5 1 Q15 1 16.3 4 L33 3.2 Q35.5 3 35.5 6 L35.5 27.3 Q35.5 28.5 34 28.7 L3 34 Q1.5 34 1.5 32.5 Z" fill="#f7dc66" stroke="#bf961a" stroke-width="1.1"/>
<path d="M3.2 11.6 L12.9 10.8 Q15.5 10.5 17.1 6.6 L33.4 5.3 Q34 5.3 34 6 L34 28.5 L3.2 34.9 Z" fill="url(#fg472_298)" stroke="#bf961a" stroke-width="1"/>
<path d="M4.5 12.6 L13 11.8 Q16.2 11.5 17.8 7.6 L33 6.4" fill="none" stroke="#fffbe0" stroke-width="0.8"/>
</svg>
<div id="t40" style="position:absolute;left:520px;top:302px;white-space:nowrap;font:400 11px/13px 'Liberation Sans',sans-serif;color:#000;transform:scaleX(0.9921);transform-origin:0 0;"><span style="">wwwstitches.com</span></div>
<div id="t41" style="position:absolute;left:520px;top:315px;white-space:nowrap;font:400 11px/13px 'Liberation Sans',sans-serif;color:#808080;transform:scaleX(0.9352);transform-origin:0 0;"><span style="">File Folder</span></div>
<svg style="position:absolute;left:254px;top:354px" width="38" height="38" viewBox="0 0 38 38">
<defs><linearGradient id="fg254_354" x1="0.2" y1="0" x2="0.6" y2="1"><stop offset="0" stop-color="#fff8c8"/><stop offset="1" stop-color="#f8df72"/></linearGradient></defs>
<path d="M1.5 4 Q1.5 1 4 1 L13.5 1 Q15 1 16.3 4 L33 3.2 Q35.5 3 35.5 6 L35.5 27.3 Q35.5 28.5 34 28.7 L3 34 Q1.5 34 1.5 32.5 Z" fill="#f7dc66" stroke="#bf961a" stroke-width="1.1"/>
<path d="M3.2 11.6 L12.9 10.8 Q15.5 10.5 17.1 6.6 L33.4 5.3 Q34 5.3 34 6 L34 28.5 L3.2 34.9 Z" fill="url(#fg254_354)" stroke="#bf961a" stroke-width="1"/>
<path d="M4.5 12.6 L13 11.8 Q16.2 11.5 17.8 7.6 L33 6.4" fill="none" stroke="#fffbe0" stroke-width="0.8"/>
</svg>
<div id="t42" style="position:absolute;left:302px;top:358px;white-space:nowrap;font:400 11px/13px 'Liberation Sans',sans-serif;color:#000;transform:scaleX(1.0114);transform-origin:0 0;"><span style="">Журнал</span></div>
<div id="t43" style="position:absolute;left:302px;top:371px;white-space:nowrap;font:400 11px/13px 'Liberation Sans',sans-serif;color:#808080;transform:scaleX(0.9352);transform-origin:0 0;"><span style="">File Folder</span></div>
<div style="position:absolute;left:39px;top:258px;width:688px;height:16px;background:rgba(0,0,0,0.25)"></div>
<div style="position:absolute;left:37px;top:256px;width:686px;height:15px;background:#ffffe1;border:1px solid #000"></div>
<div id="t44" style="position:absolute;left:40px;top:259px;white-space:nowrap;font:400 11px/13px 'Liberation Sans',sans-serif;color:#000;transform:scaleX(1.0134);transform-origin:0 0;"><span style="">Помещение копий выбранных элементов на общедоступную веб-страницу, чтобы открыть к ним доступ для других пользователей.</span></div>
</body></html>
